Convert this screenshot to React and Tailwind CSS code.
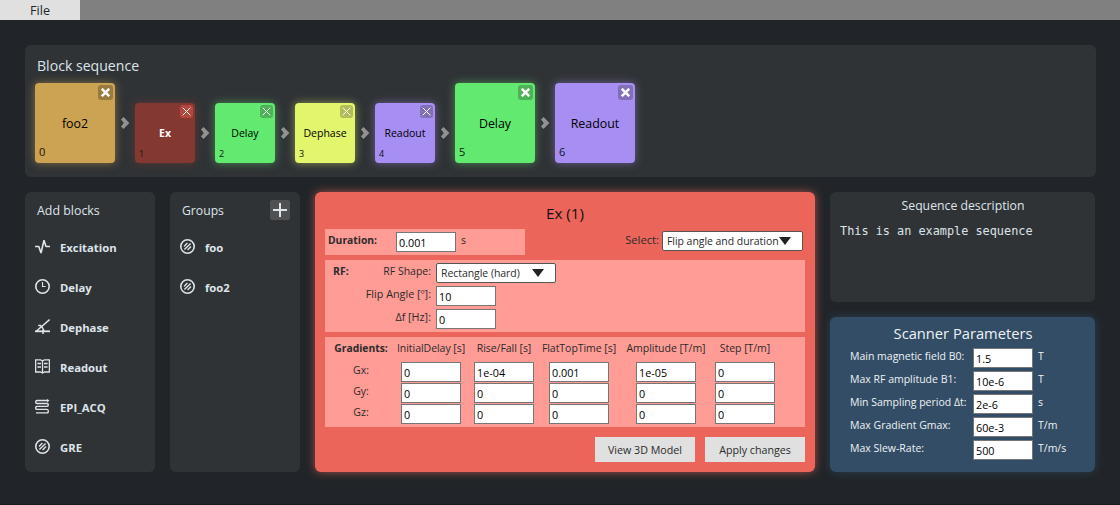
import React from 'react';

function Chevron({ small }) {
  return (
    <div className={`flex w-5 items-center justify-center ${small ? 'h-[60px]' : 'h-20'}`}>
      <svg width="10" height="12" viewBox="0 0 10 12" fill="#929292">
        <path d="M1 2.6L3.6 0L9.4 6L3.6 12L1 9.4L3.8 6Z" />
      </svg>
    </div>
  );
}

const blocks = [
  { name: 'foo2', big: true, box: 'bg-[#cca352] shadow-[0_0_8px_rgba(204,163,82,0.55)]', close: 'bg-[#997b40]' },
  { name: 'Ex', active: true, box: 'bg-[#833831] shadow-[0_0_8px_rgba(131,56,49,0.6)]', close: 'bg-[#b5473f]' },
  { name: 'Delay', box: 'bg-[#61e970] shadow-[0_0_8px_rgba(97,233,112,0.5)]', close: 'bg-[#4eb259]' },
  { name: 'Dephase', box: 'bg-[#e2f56d] shadow-[0_0_8px_rgba(226,245,109,0.5)]', close: 'bg-[#b0bd59]' },
  { name: 'Readout', box: 'bg-[#a68ef3] shadow-[0_0_8px_rgba(166,142,243,0.5)]', close: 'bg-[#836fb8]' },
  { name: 'Delay', big: true, box: 'bg-[#61e970] shadow-[0_0_8px_rgba(97,233,112,0.5)]', close: 'bg-[#4eb259]' },
  { name: 'Readout', big: true, box: 'bg-[#a68ef3] shadow-[0_0_8px_rgba(166,142,243,0.5)]', close: 'bg-[#836fb8]' },
];

function Block({ block, index }) {
  const { name, big, active, box, close } = block;
  return (
    <div
      className={`relative flex items-center justify-center rounded-[4px] ${box} ${
        big ? 'size-20 text-[12.4px]' : 'size-[60px] text-[10.5px]'
      } ${active ? 'font-bold text-white' : 'text-black'}`}
    >
      <span className="pt-[2px]">{name}</span>
      <span
        className={`absolute bottom-[3px] left-1 font-normal text-[#111] ${
          big ? 'text-[11px] leading-4' : 'text-[9px] leading-3'
        }`}
      >
        {index}
      </span>
      <button
        className={`absolute top-[2px] flex items-center justify-center rounded-[3px] ${close} ${
          big ? 'right-[2px] size-[15px]' : 'right-[2px] size-[13px]'
        }`}
      >
        {big ? (
          <svg width="9" height="9" viewBox="0 0 9 9" stroke="#fff" strokeWidth="2.5">
            <path d="M0.8 0.8L8.2 8.2M8.2 0.8L0.8 8.2" />
          </svg>
        ) : (
          <svg width="9" height="9" viewBox="0 0 9 9" stroke="#fff" strokeWidth="1">
            <path d="M0.7 0.7L8.3 8.3M8.3 0.7L0.7 8.3" />
          </svg>
        )}
      </button>
    </div>
  );
}

function Icon({ children }) {
  return (
    <svg width="15" height="15" viewBox="0 0 15 15" fill="none" stroke="#dde4ea" strokeWidth="1.6">
      {children}
    </svg>
  );
}

const PulseIcon = () => (
  <Icon>
    <path d="M0 7.5H3.8L6 14L9 1.2L11 7.5H15" strokeLinejoin="bevel" />
  </Icon>
);
const ClockIcon = () => (
  <Icon>
    <circle cx="7.5" cy="7.5" r="6.7" />
    <path d="M7.5 3V7.5H10.5" strokeWidth="1.1" />
  </Icon>
);
const AngleIcon = () => (
  <Icon>
    <path d="M0 12.3H15" strokeWidth="1.8" />
    <path d="M1.5 12L14.6 0.6M3.2 6.6H5.5Q8.2 8.5 9 12M8 11V15" strokeWidth="1.5" />
  </Icon>
);
const BookIcon = () => (
  <Icon>
    <path d="M0.6 0.8H5.5L7.5 1.8L9.5 0.8H14.4V13H9.5L7.5 14L5.5 13H0.6ZM7.5 1.8V14.8" strokeWidth="1.3" />
    <path d="M2.4 4.5H6M2.4 8H6M9 4.5H12.6M9 8H12.6" />
  </Icon>
);
const SnakeIcon = () => (
  <Icon>
    <path
      d="M13 1.5H2Q0.7 1.5 0.7 3T2 4.5H12Q13.3 4.5 13.3 5.9T12 7.4H2Q0.7 7.4 0.7 8.9T2 10.4H12Q13.3 10.4 13.3 12.2T12 13.9H1"
      strokeWidth="1.4"
    />
    <path d="M12 0V3.4L14.5 1.6Z" fill="#dde4ea" stroke="none" />
  </Icon>
);
const GroupIcon = () => (
  <Icon>
    <circle cx="7.5" cy="7.5" r="6.7" />
    <path d="M4 7.4L7.4 4M4.4 10.6L10.6 4.4M7.6 11L11 7.6" strokeWidth="1.4" />
  </Icon>
);

function MenuItem({ icon, label }) {
  return (
    <li className="flex h-10 items-center gap-[10px]">
      <span className="pb-px">{icon}</span>
      <span className="pt-0.5 text-[11.3px] font-bold">{label}</span>
    </li>
  );
}

function Field({ value }) {
  return (
    <input
      readOnly
      value={value}
      className="block h-5 w-[60px] border border-[#767676] bg-white pt-px pl-[2px] text-[10.8px] leading-[14px] text-black outline-none"
    />
  );
}

function Select({ value, className }) {
  return (
    <div
      className={`flex h-5 items-center rounded-[2px] border border-[#555] bg-white pl-[4px] text-[10.5px] whitespace-nowrap text-[#2b2b2b] ${className}`}
    >
      <span className="pt-px tracking-[-0.05px]">{value}</span>
      <svg width="12" height="8" viewBox="0 0 12 8" fill="#222" className="mb-px shrink-0">
        <path d="M0 0H12L6 8Z" />
      </svg>
    </div>
  );
}

const columns = ['InitialDelay [s]', 'Rise/Fall [s]', 'FlatTopTime [s]', 'Amplitude [T/m]', 'Step [T/m]'];
const gradients = [
  { axis: 'Gx:', values: ['0', '1e-04', '0.001', '1e-05', '0'] },
  { axis: 'Gy:', values: ['0', '0', '0', '0', '0'] },
  { axis: 'Gz:', values: ['0', '0', '0', '0', '0'] },
];
const gradientGrid = 'grid grid-cols-[66px_74px_72px_78px_96px_62px] justify-items-center';

const scanner = [
  ['Main magnetic field B0:', '1.5', 'T'],
  ['Max RF amplitude B1:', '10e-6', 'T'],
  ['Min Sampling period Δt:', '2e-6', 's'],
  ['Max Gradient Gmax:', '60e-3', 'T/m'],
  ['Max Slew-Rate:', '500', 'T/m/s'],
];

const panel = 'rounded-[6px] bg-[#303336]';

export default function App() {
  return (
    <div className="h-[505px] w-[1120px] overflow-hidden border-b border-[#17191c] bg-[#212529] font-['Open_Sans','Noto_Sans',sans-serif] text-[#dde4ea]">
      <header className="flex h-5 bg-[#808080]">
        <button className="h-5 w-20 bg-[#e0e0e0] pt-px text-[12.6px] leading-5 text-[#212529]">File</button>
      </header>

      <main className="flex flex-col gap-[15px] pt-[25px] pr-6 pl-[25px]">
        <section className={`h-[132px] ${panel}`}>
          <h2 className="h-[38px] pt-[11px] pl-3 text-[14.1px] leading-5">Block sequence</h2>
          <div className="flex items-end pl-[10px]">
            {blocks.map((block, i) => (
              <React.Fragment key={i}>
                {i > 0 && <Chevron small={!blocks[i - 1].big} />}
                <Block block={block} index={i} />
              </React.Fragment>
            ))}
          </div>
        </section>

        <div className="flex h-[280px] gap-[15px]">
          <section className={`w-[130px] ${panel}`}>
            <h2 className="h-[35px] pt-[9px] pl-3 text-[12.4px] leading-5">Add blocks</h2>
            <ul className="pl-[10px]">
              <MenuItem icon={<PulseIcon />} label="Excitation" />
              <MenuItem icon={<ClockIcon />} label="Delay" />
              <MenuItem icon={<AngleIcon />} label="Dephase" />
              <MenuItem icon={<BookIcon />} label="Readout" />
              <MenuItem icon={<SnakeIcon />} label="EPI_ACQ" />
              <MenuItem icon={<GroupIcon />} label="GRE" />
            </ul>
          </section>

          <section className={`w-[130px] ${panel}`}>
            <div className="flex h-[35px] items-start justify-between pt-2 pr-[10px] pl-3">
              <h2 className="pt-px text-[12.2px] leading-5">Groups</h2>
              <button className="flex size-5 items-center justify-center rounded-[2px] bg-[#505152]">
                <svg width="14" height="14" viewBox="0 0 14 14" stroke="#dde4ea" strokeWidth="2">
                  <path d="M7 0V14M0 7H14" />
                </svg>
              </button>
            </div>
            <ul className="pl-[10px]">
              <MenuItem icon={<GroupIcon />} label="foo" />
              <MenuItem icon={<GroupIcon />} label="foo2" />
            </ul>
          </section>

          <section className="w-[500px] rounded-[6px] bg-[#ec655b] px-[10px] text-[10.5px] text-[#2b2b2b] shadow-[0_0_10px_rgba(236,101,91,0.65)]">
            <h2 className="h-[37px] pt-[11px] text-center text-[15.2px] leading-5 text-[#111]">Ex (1)</h2>

            <div className="flex h-[26px] justify-between">
              <div className="flex w-[200px] bg-[#ff9c95] pt-[3px] pl-[3px]">
                <span className="w-[68px] text-[10.3px] leading-[17px] font-bold">Duration:</span>
                <Field value="0.001" />
                <span className="pl-[5px] leading-[17px]">s</span>
              </div>
              <div className="flex gap-[3px] pt-[2px] pr-[2px]">
                <span className="text-[11.2px] leading-[18px]">Select:</span>
                <Select value="Flip angle and duration" className="w-[141px]" />
              </div>
            </div>

            <div className="mt-[5px] flex h-[72px] bg-[#ff9c95] pt-[3px] pl-2">
              <span className="w-[15px] leading-4 font-bold">RF:</span>
              <div className="flex flex-col gap-[3px]">
                <div className="flex gap-[5px]">
                  <span className="w-[83px] text-right leading-4">RF Shape:</span>
                  <Select value="Rectangle (hard)" className="w-[120px] gap-[12px]" />
                </div>
                <div className="flex gap-[5px]">
                  <span className="w-[83px] text-right text-[10.8px] leading-4">Flip Angle [º]:</span>
                  <Field value="10" />
                </div>
                <div className="flex gap-[5px]">
                  <span className="w-[83px] text-right text-[10.8px] leading-4">Δf [Hz]:</span>
                  <Field value="0" />
                </div>
              </div>
            </div>

            <div className="mt-[5px] h-[90px] bg-[#ff9c95] pt-[3px] pl-[3px] whitespace-nowrap">
              <div className={`h-[22px] leading-4 ${gradientGrid}`}>
                <span className="text-[10.3px] font-bold">Gradients:</span>
                {columns.map((c) => (
                  <span key={c} className="tracking-[-0.04px]">{c}</span>
                ))}
              </div>
              <div className="flex flex-col gap-px">
                {gradients.map((g) => (
                  <div key={g.axis} className={gradientGrid}>
                    <span className="leading-4">{g.axis}</span>
                    {g.values.map((v, i) => (
                      <Field key={i} value={v} />
                    ))}
                  </div>
                ))}
              </div>
            </div>

            <div className="mt-[10px] flex justify-end gap-[10px] text-[10.7px]">
              <button className="h-[25px] w-[100px] bg-[#e0e0e0] pt-px">View 3D Model</button>
              <button className="h-[25px] w-[100px] bg-[#e0e0e0] pt-px">Apply changes</button>
            </div>
          </section>

          <div className="flex w-[265px] flex-col gap-[15px]">
            <section className={`h-[110px] ${panel}`}>
              <h2 className="pt-1 pl-px text-center text-[12.25px] leading-5">Sequence description</h2>
              <p className="pt-[6px] pl-[10px] font-['DejaVu_Sans_Mono',monospace] text-[11.85px] leading-[18px]">
                This is an example sequence
              </p>
            </section>
            <section className="h-[155px] rounded-[6px] bg-[#334d66] text-[10.5px] text-[#eef2f5] shadow-[0_0_10px_rgba(51,77,102,0.65)]">
              <h2 className="h-[31px] pt-[6px] pl-px text-center text-[14.7px] leading-5">Scanner Parameters</h2>
              <div className="flex flex-col gap-[3px] pl-5">
                {scanner.map(([label, value, unit]) => (
                  <div key={label} className="flex">
                    <span className="w-[123px] leading-4 whitespace-nowrap">{label}</span>
                    <Field value={value} />
                    <span className="pl-[5px] leading-4">{unit}</span>
                  </div>
                ))}
              </div>
            </section>
          </div>
        </div>
      </main>
    </div>
  );
}
